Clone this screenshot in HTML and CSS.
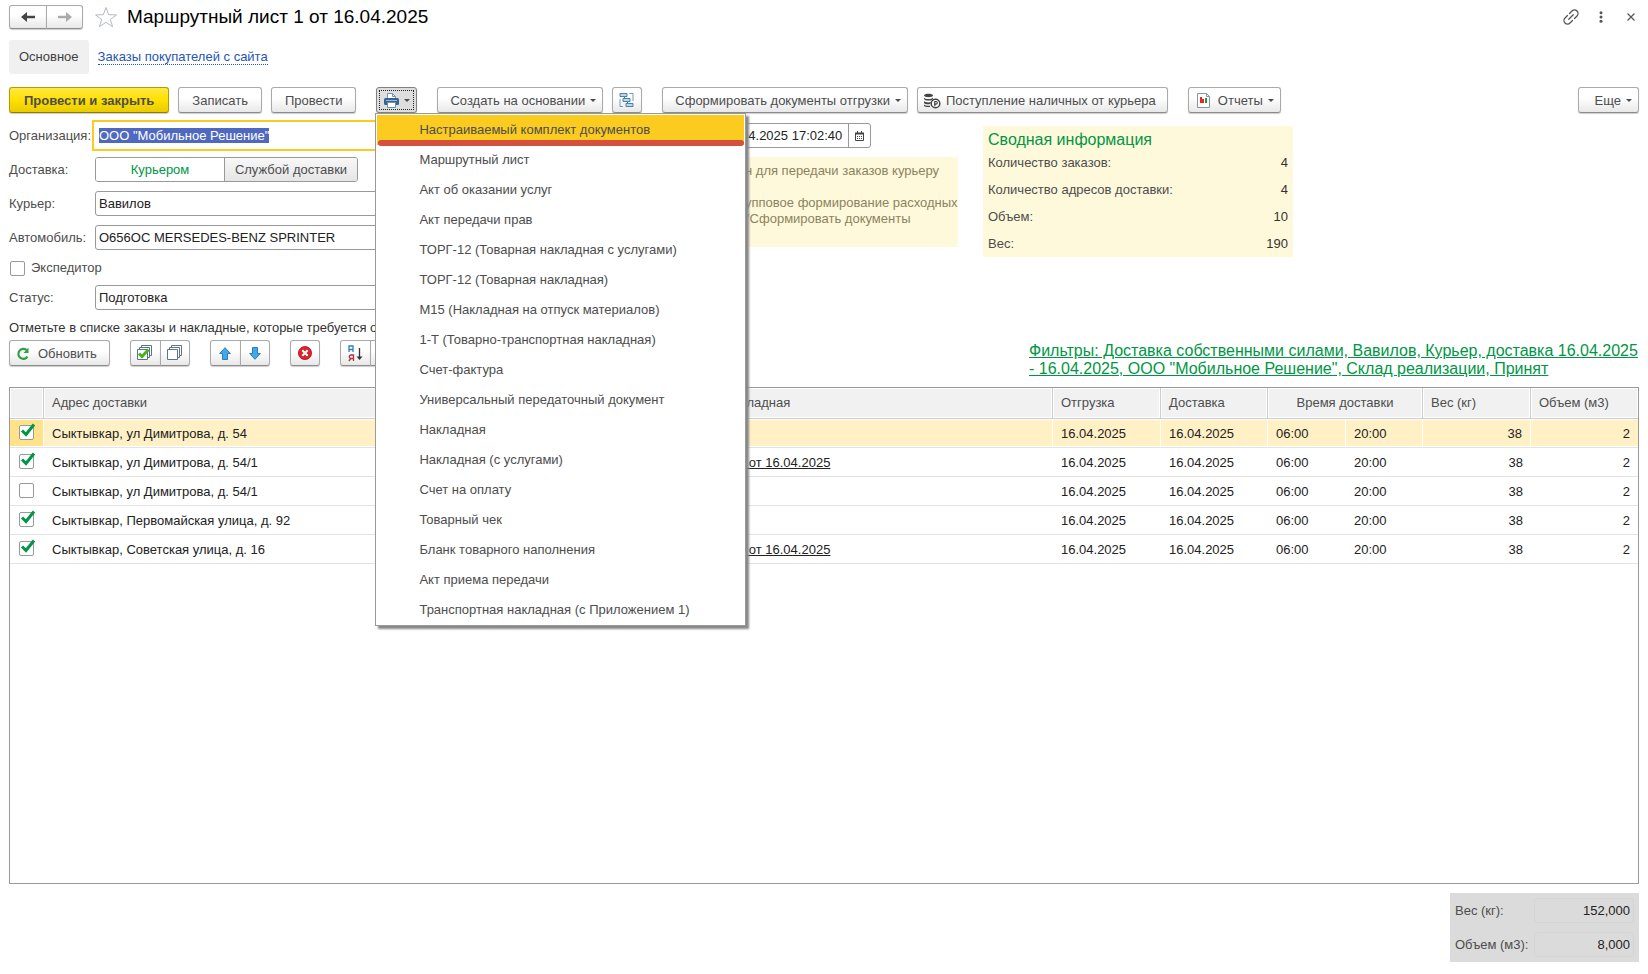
FILE: index.html
```html
<!DOCTYPE html>
<html lang="ru">
<head>
<meta charset="utf-8">
<title>Маршрутный лист 1 от 16.04.2025</title>
<link rel="stylesheet" href="styles.css">
</head>
<body>
<header class="titlebar">
  <div class="group">
    <button class="btn nav" aria-label="Назад"><svg width="16" height="12" viewBox="0 0 16 12"><path d="M1 6 7 1v3.700h8v2.600H7V11z" fill="#444"/></svg></button>
    <button class="btn nav" aria-label="Вперед"><svg width="16" height="12" viewBox="0 0 16 12"><path d="M15 6 9 1v3.700H1v2.600h8V11z" fill="#aaa"/></svg></button>
  </div>
  <svg class="star" width="24" height="22" viewBox="0 0 24 22"><path d="M12 1.500 14.700 8.700 22.500 8.900 16.300 13.500 18.600 20.700 12 16.300 5.400 20.700 7.700 13.500 1.500 8.900 9.300 8.700z" fill="#fff" stroke="#b4b9c0"/></svg>
  <h1>Маршрутный лист 1 от 16.04.2025</h1>
  <div class="window-tools">
    <button aria-label="Ссылка"><svg width="16" height="16" viewBox="0 0 16 16" fill="none" stroke="#555" stroke-width="1.300" stroke-linecap="round"><path d="M6.500 4.500 9 2a3.300 3.300 0 0 1 5 5l-2.500 2.500M9.500 11.500 7 14a3.300 3.300 0 0 1-5-5l2.500-2.500M5.800 10.200l4.400-4.400"/></svg></button>
    <button aria-label="Меню"><svg width="4" height="12" viewBox="0 0 4 12" fill="#555"><circle cx="2" cy="1.700" r="1.500"/><circle cx="2" cy="6" r="1.500"/><circle cx="2" cy="10.300" r="1.500"/></svg></button>
    <button aria-label="Закрыть"><svg width="8" height="8" viewBox="0 0 8 8" stroke="#555" stroke-width="1.200"><path d="M.5.5l7 7M7.500.5l-7 7"/></svg></button>
  </div>
</header>

<nav class="tabs">
  <span class="tab">Основное</span>
  <a href="#orders">Заказы покупателей с сайта</a>
</nav>

<div class="commands">
  <div class="cluster">
    <button class="btn primary">Провести и закрыть</button>
    <button class="btn">Записать</button>
    <button class="btn">Провести</button>
  </div>
  <div class="print">
    <button class="btn pressed" aria-label="Печать" aria-expanded="true"><svg width="15" height="15" viewBox="0 0 15 15"><path d="M3.500 6V.5h5l3 3V6" fill="#fff" stroke="#7590ab"/><path d="M8.500.5v3h3" fill="none" stroke="#7590ab"/><rect x="0" y="5" width="15" height="7" rx="1.500" fill="#386590"/><path d="M2 7.500h11" stroke="#9dbbd5"/><path d="M3.500 9.500h8v5h-8z" fill="#fff" stroke="#7590ab"/></svg><i class="caret"></i></button>
    <ul class="menu">
      <li class="current"><button>Настраиваемый комплект документов</button></li>
      <li><button>Маршрутный лист</button></li>
      <li><button>Акт об оказании услуг</button></li>
      <li><button>Акт передачи прав</button></li>
      <li><button>ТОРГ-12 (Товарная накладная с услугами)</button></li>
      <li><button>ТОРГ-12 (Товарная накладная)</button></li>
      <li><button>М15 (Накладная на отпуск материалов)</button></li>
      <li><button>1-Т (Товарно-транспортная накладная)</button></li>
      <li><button>Счет-фактура</button></li>
      <li><button>Универсальный передаточный документ</button></li>
      <li><button>Накладная</button></li>
      <li><button>Накладная (с услугами)</button></li>
      <li><button>Счет на оплату</button></li>
      <li><button>Товарный чек</button></li>
      <li><button>Бланк товарного наполнения</button></li>
      <li><button>Акт приема передачи</button></li>
      <li><button>Транспортная накладная (с Приложением 1)</button></li>
    </ul>
  </div>
  <div class="cluster">
    <button class="btn drop">Создать на основании<i class="caret"></i></button>
    <button class="btn square" aria-label="Структура подчиненности"><svg width="16" height="16" viewBox="0 0 16 16" fill="none" stroke="#6a9cc4"><path d="M10.500 1.500h3.500v7.500M4 14.500H1V7"/><path d="M1 1.500h7v3H1zM4 6.500h7v3H4zM7 11.500h7v3H7z" fill="#bcd6ea" stroke="#4a80ac"/><path d="M5.500 4.500v2M8.500 9.500v2" stroke="#4a80ac"/></svg></button>
  </div>
  <div class="cluster">
    <button class="btn drop">Сформировать документы отгрузки<i class="caret"></i></button>
    <button class="btn iconic"><svg width="17" height="16" viewBox="0 0 17 16"><path d="M0 2.500C0 .3 9 .3 9 2.500S0 4.700 0 2.500zM0 4.500c1 2 8 2 9 0V6c-1 2-8 2-9 0zM0 8c1 1.500 5 1.800 7 1L6 11c-2 .5-5 .3-6-1zM0 11.500c1 1.300 4 1.500 6 1.300V14c-2 .3-5 0-6-1z" fill="#444"/><circle cx="11.500" cy="10.500" r="4.300" fill="#fff" stroke="#444" stroke-width="1.500"/><path d="M10.800 13.200V8.500h1.200a1.300 1.300 0 0 1 0 2.600H10" fill="none" stroke="#444" stroke-width="1.200"/></svg>Поступление наличных от курьера</button>
  </div>
  <button class="btn iconic drop"><svg width="13" height="15" viewBox="0 0 13 15"><path d="M.5.5h9l3 3v11H.5z" fill="#fff" stroke="#8296aa"/><path d="M9.500.5v3h3" fill="none" stroke="#8296aa"/><path d="M3 4h2v6H3z" fill="#e22"/><path d="M5 6h2v4H5z" fill="#e22"/><path d="M8 5h2v5H8z" fill="#1d9a2a"/></svg><span>Отчеты</span><i class="caret"></i></button>
  <button class="btn drop more">Еще<i class="caret"></i></button>
</div>

<main>
<div class="form">
  <div class="fields">
    <label for="org">Организация:</label><input id="org" class="field org" value='ООО "Мобильное Решение"'>
    <span>Доставка:</span>
    <div class="switch">
      <button class="on">Курьером</button><button>Службой доставки</button>
    </div>
    <label for="courier">Курьер:</label><input id="courier" class="field" value="Вавилов">
    <label for="car">Автомобиль:</label><input id="car" class="field" value="О656ОС MERSEDES-BENZ SPRINTER">
    <label class="check"><input type="checkbox">Экспедитор</label>
    <label for="status">Статус:</label><input id="status" class="field" value="Подготовка">
  </div>
  <div class="middle">
    <div class="date">
      <input class="field" aria-label="Дата" value="16.04.2025 17:02:40">
      <button aria-label="Календарь"><svg width="9" height="10" viewBox="0 0 9 10"><path d="M.5 2.500h8v7h-8z" fill="#fff" stroke="#444"/><path d="M0 1.500h9v2H0zM2 0h1v2H2zM6 0h1v2H6z" fill="#444"/><path d="M2 5.500h5M2 7.500h5" stroke="#444" stroke-dasharray="1 1"/></svg></button>
    </div>
    <p class="hint">н для передачи заказов курьеру<br><br>упповое формирование расходных<br>"Сформировать документы</p>
  </div>
  <section class="summary">
    <h2>Сводная информация</h2>
    <dl>
      <dt>Количество заказов:</dt><dd>4</dd>
      <dt>Количество адресов доставки:</dt><dd>4</dd>
      <dt>Объем:</dt><dd>10</dd>
      <dt>Вес:</dt><dd>190</dd>
    </dl>
  </section>
</div>

<p class="note">Отметьте в списке заказы и накладные, которые требуется отгрузить</p>

<div class="list-tools">
  <button class="btn iconic refresh"><svg width="14" height="14" viewBox="0 0 14 14"><path d="M11.500 9.700A5 5 0 1 1 10.500 3" fill="none" stroke="#2fa144" stroke-width="2.200"/><path d="M12.500.5v5.500H7.500z" fill="#2fa144"/></svg>Обновить</button>
  <div class="group">
    <button class="btn square" aria-label="Отметить все"><svg width="16" height="16" viewBox="0 0 16 16" fill="#fff" stroke="#5b7488"><path d="M4.500.5h10v10h-10z"/><path d="M2.500 2.500h10v10h-10z"/><path d="M.5 4.500h10v10H.5z"/><path d="M2 8.500 5 11.500l6.500-7" fill="none" stroke="#4cb01f" stroke-width="3"/></svg></button>
    <button class="btn square" aria-label="Снять отметки"><svg width="16" height="16" viewBox="0 0 16 16" fill="#fff" stroke="#5b7488"><path d="M4.500.5h10v10h-10z"/><path d="M2.500 2.500h10v10h-10z"/><path d="M.5 4.500h10v10H.5z"/></svg></button>
  </div>
  <div class="group">
    <button class="btn square" aria-label="Вверх"><svg width="12" height="13" viewBox="0 0 12 13"><path d="M6 .7 11.300 6.500H8.500v6h-5v-6H.7z" fill="#3fa9ec" stroke="#2c7db5"/></svg></button>
    <button class="btn square" aria-label="Вниз"><svg width="12" height="13" viewBox="0 0 12 13"><path d="M6 12.300 11.300 6.500H8.500v-6h-5v6H.7z" fill="#3fa9ec" stroke="#2c7db5"/></svg></button>
  </div>
  <button class="btn square" aria-label="Удалить"><svg width="14" height="14" viewBox="0 0 14 14"><circle cx="7" cy="7" r="6.600" fill="#d9222b" stroke="#b01720" stroke-width=".8"/><path d="M4.300 4.300l5.400 5.400M9.700 4.300 4.300 9.700" stroke="#fff" stroke-width="2"/></svg></button>
  <div class="group">
    <button class="btn square" aria-label="Сортировать по возрастанию"><svg width="15" height="17" viewBox="0 0 15 17" fill="none"><path d="M1 7V1h4v6M1 4.500h4" stroke="#2b7fc0" stroke-width="1.300"/><path d="M5.500 16v-6H3a1.500 1.500 0 0 0 0 3.500h2.500M3 13.500.8 16" stroke="#b8323a" stroke-width="1.300"/><path d="M11.500 3v10" stroke="#333" stroke-width="1.300"/><path d="M8.500 11.500h6l-3 3.500z" fill="#333"/></svg></button>
    <button class="btn square" aria-label="Сортировать по убыванию"></button>
  </div>
  <a class="filters" href="#filters">Фильтры: Доставка собственными силами, Вавилов, Курьер, доставка 16.04.2025 - 16.04.2025, ООО "Мобильное Решение", Склад реализации, Принят</a>
</div>

<div class="list">
<table>
  <colgroup><col class="c-check"><col><col class="c-doc"><col class="c-ship"><col class="c-deliver"><col class="c-from"><col class="c-to"><col class="c-weight"><col class="c-volume"></colgroup>
  <thead><tr><th></th><th>Адрес доставки</th><th>Накладная</th><th>Отгрузка</th><th>Доставка</th><th colspan="2" class="mid">Время доставки</th><th>Вес (кг)</th><th>Объем (м3)</th></tr></thead>
  <tbody>
  <tr class="selected"><td><input type="checkbox" aria-label="Выбрать" checked></td><td>Сыктывкар, ул Димитрова, д. 54</td><td></td><td>16.04.2025</td><td>16.04.2025</td><td>06:00</td><td>20:00</td><td class="num">38</td><td class="num">2</td></tr>
  <tr><td><input type="checkbox" aria-label="Выбрать" checked></td><td>Сыктывкар, ул Димитрова, д. 54/1</td><td><a href="#doc">№1 от 16.04.2025</a></td><td>16.04.2025</td><td>16.04.2025</td><td>06:00</td><td>20:00</td><td class="num">38</td><td class="num">2</td></tr>
  <tr><td><input type="checkbox" aria-label="Выбрать"></td><td>Сыктывкар, ул Димитрова, д. 54/1</td><td></td><td>16.04.2025</td><td>16.04.2025</td><td>06:00</td><td>20:00</td><td class="num">38</td><td class="num">2</td></tr>
  <tr><td><input type="checkbox" aria-label="Выбрать" checked></td><td>Сыктывкар, Первомайская улица, д. 92</td><td></td><td>16.04.2025</td><td>16.04.2025</td><td>06:00</td><td>20:00</td><td class="num">38</td><td class="num">2</td></tr>
  <tr><td><input type="checkbox" aria-label="Выбрать" checked></td><td>Сыктывкар, Советская улица, д. 16</td><td><a href="#doc">№2 от 16.04.2025</a></td><td>16.04.2025</td><td>16.04.2025</td><td>06:00</td><td>20:00</td><td class="num">38</td><td class="num">2</td></tr>
  </tbody>
</table>
</div>

<div class="totals">
  <label for="tw">Вес (кг):</label><input id="tw" value="152,000" readonly>
  <label for="tv">Объем (м3):</label><input id="tv" value="8,000" readonly>
</div>
</main>
<script src="script.js"></script>
</body>
</html>
```
FILE: styles.css
```css
* { box-sizing: border-box; }
body, h1, h2, p, dl, dd, ul { margin: 0; padding: 0; }
body {
  min-height: 100vh;
  display: flex;
  flex-direction: column;
  padding: 0 9px 12px;
  background: #fff;
  color: #4d4d4d;
  font: 13px/16px "Liberation Sans", Arial, sans-serif;
}
button, input { font: inherit; color: inherit; }
button { padding: 0; border: 0; background: none; white-space: nowrap; }
svg { display: block; flex: none; }

.titlebar { display: flex; align-items: center; height: 34px; }
.titlebar h1 { margin-left: 9px; font-size: 19px; font-weight: 400; line-height: 22px; color: #000; }
.star { margin-left: 11px; }
.window-tools { display: flex; align-items: center; gap: 14px; margin-left: auto; }
.window-tools button { display: flex; justify-content: center; width: 16px; }

.btn {
  display: flex;
  align-items: center;
  justify-content: center;
  height: 26px;
  padding: 1px 13px 0;
  border: 1px solid #aaa;
  border-bottom-color: #8c8c8c;
  border-radius: 3px;
  background: linear-gradient(#fff 40%, #e8e8e8);
  box-shadow: 0 1px 1px #ccc;
}
.nav { width: 37px; height: 24px; padding: 0; }
.square { width: 30px; padding: 0; }
.group { display: flex; }
.group .btn + .btn { margin-left: -1px; border-radius: 0 3px 3px 0; }
.group .btn:first-child { border-radius: 3px 0 0 3px; width: 31px; }
.group .nav:first-child { width: 38px; }
.primary {
  padding: 1px 14px 0;
  border-color: #b39b00 #b39b00 #8f7c00;
  background: linear-gradient(#ffe943, #ffe000 50%, #e9cc00);
  font-weight: 700;
}
.caret { width: 0; margin-left: 5px; border: 3px solid transparent; border-top-color: #4d4d4d; border-bottom: 0; }
.drop { padding-right: 6px; padding-left: 12px; }
.iconic { gap: 5px; padding-left: 6px; padding-right: 11px; }
.iconic.drop { gap: 8px; padding-left: 8px; padding-right: 6px; }
.iconic .caret { margin-left: -3px; }
.more { min-width: 61px; margin-left: auto; justify-content: flex-end; }
.pressed { width: 41px; padding: 0; border-color: #808080; background: #dedede; outline: 1px dotted #222; outline-offset: -4px; }

.tabs { display: flex; align-items: center; gap: 9px; margin-top: 6px; }
.tab { padding: 9px 10px; border-radius: 3px; background: #f0f0f0; color: #404040; }
.tabs a { color: #1f55b5; text-decoration: none; border-bottom: 1px dotted #1f55b5; line-height: 14px; }

.commands { display: flex; gap: 20px; margin-top: 13px; }
.cluster { display: flex; gap: 9px; }

.print { position: relative; }
.menu {
  position: absolute;
  z-index: 5;
  top: 26px;
  left: -1px;
  width: 371px;
  padding: 1px 1px 0;
  border: 1px solid #999;
  background: #fff;
  box-shadow: 3px 3px 2px #888;
  list-style: none;
}
.menu button { width: 100%; height: 30px; padding: 0 42px; text-align: left; }
.current { position: relative; background: #fbcb1f; }
.current::after { content: ""; position: absolute; left: 1px; right: 0; bottom: -1px; height: 6px; border-radius: 3px; background: #d4503f; }

main { flex: 1; display: flex; flex-direction: column; }
.form { display: flex; align-items: flex-start; gap: 25px; margin-top: 10px; }
.fields { flex: 0 1 680px; display: grid; grid-template-columns: 86px 1fr; grid-auto-rows: minmax(17px, auto); gap: 9px 0; align-items: center; }
.field { width: 100%; height: 25px; padding: 0 3px; border: 1px solid #999; border-radius: 3px; background: #fff; color: #222; }
.org:focus { border-color: #fff; outline: 2px solid #fbcb1f; outline-offset: 1px; border-radius: 0; }
.org::selection { background: #4f69c0; color: #fff; }
.switch { display: grid; grid-template-columns: 128px 1fr; width: 263px; height: 25px; border: 1px solid #999; border-radius: 3px; overflow: hidden; }
.switch button { border-left: 1px solid #999; background: linear-gradient(#f8f8f8, #e5e5e5); }
.switch .on { border-left: 0; background: #fff; color: #009646; }
.check { grid-column: 1 / 3; display: flex; align-items: center; gap: 4px; height: 17px; padding-left: 1px; }
input[type="checkbox"] {
  appearance: none;
  display: block;
  flex: none;
  width: 17px;
  height: 18px;
  margin: 0;
  background: url("data:image/svg+xml,%3Csvg xmlns='http://www.w3.org/2000/svg' width='17' height='18'%3E%3Crect x='.5' y='2.500' width='14' height='14' rx='1.500' fill='%23fff' stroke='%23999'/%3E%3C/svg%3E") no-repeat;
}
input[type="checkbox"]:checked {
  background-image: url("data:image/svg+xml,%3Csvg xmlns='http://www.w3.org/2000/svg' width='17' height='18'%3E%3Crect x='.5' y='2.500' width='14' height='14' rx='1.500' fill='%23fff' stroke='%23999'/%3E%3Cpath d='M3 7.500 7 11.500 15 1.500' fill='none' stroke='%23009646' stroke-width='3'/%3E%3C/svg%3E");
}

.middle { flex: none; width: 244px; }
.date { display: flex; width: 157px; }
.date .field { padding-left: 8px; border-radius: 3px 0 0 3px; }
.date button { display: flex; flex: none; align-items: center; justify-content: center; width: 23px; margin-left: -1px; border: 1px solid #999; border-radius: 0 3px 3px 0; }
.hint { height: 90px; margin-top: 9px; padding: 6px 0 0 31px; background: #fff9db; color: #8b8360; white-space: nowrap; }

.summary { flex: none; width: 310px; margin-top: 3px; padding: 5px 5px 0; background: #fff9db; }
.summary h2 { font-size: 16px; font-weight: 400; line-height: 18px; color: #009646; }
.summary dl { display: grid; grid-template-columns: 1fr auto; line-height: 27px; }
.summary dd { color: #333; text-align: right; }

.note { margin-top: 10px; color: #333; }
.list-tools { display: flex; gap: 20px; margin-top: 4px; }
.refresh { gap: 8px; padding-right: 12px; }
.filters { width: 610px; margin: 2px 0 0 auto; font-size: 16px; line-height: 18px; color: #009646; text-underline-offset: 1px; }

.list { flex: 1; margin-top: 9px; border: 1px solid #999; }
table { width: 100%; table-layout: fixed; border-spacing: 0; }
.c-check { width: 34px; }
.c-doc { width: 337px; }
.c-ship { width: 108px; }
.c-deliver { width: 107px; }
.c-from { width: 78px; }
.c-to { width: 77px; }
.c-weight { width: 108px; }
.c-volume { width: 107px; }
th, td { padding: 0 8px; text-align: left; white-space: nowrap; }
th { height: 31px; border: solid #ccc; border-width: 0 1px 1px 0; background: #f1f1f1; box-shadow: inset 0 0 0 1px #fff; font-weight: 400; }
th:last-child { border-right: 0; }
.mid { text-align: center; }
td { height: 29px; padding-top: 1px; border-bottom: 1px solid #e3e3e3; color: #222; }
td:first-child { padding: 0 0 3px 9px; }
td a { color: #222; }
td.num { text-align: right; }
.selected td { border-right: 1px solid #fff; background: #fff1c5; box-shadow: inset 0 1px #fff, inset 0 -1px #fff; }
.selected td:first-child { background: #ffe28a; }
.selected td:last-child { border-right: 0; }

.totals { align-self: flex-end; display: grid; grid-template-columns: 79px 100px; gap: 9px 0; align-items: center; margin-top: 9px; padding: 5px; background: #dbdbdb; }
.totals input { width: 100%; height: 25px; padding: 0 3px; border: 1px solid #d4d4d4; border-radius: 3px; background: none; text-align: right; color: #222; }
```
FILE: script.js
```js
document.getElementById("org").select();
```
